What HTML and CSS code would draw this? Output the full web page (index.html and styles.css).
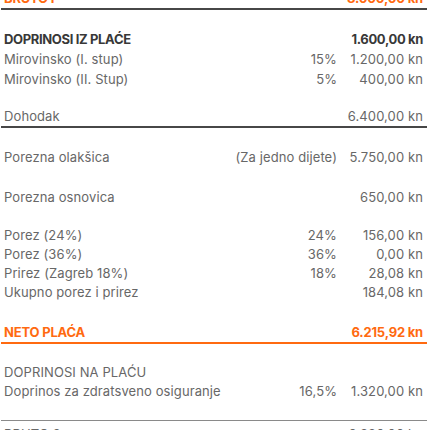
FILE: index.html
```html
<!DOCTYPE html>
<html>
<head>
<meta charset="utf-8">
<link rel="stylesheet" href="styles.css">
</head>
<body>
<div class="sheet">
  <div class="row total orange line-dark"><span class="label">BRUTO I</span><span class="pct"></span><span class="amt">8.000,00 kn</span></div>

  <div class="group g1">
    <div class="row bold"><span class="label">DOPRINOSI IZ PLAĆE</span><span class="pct"></span><span class="amt">1.600,00 kn</span></div>
    <div class="row"><span class="label">Mirovinsko (I. stup)</span><span class="pct">15%</span><span class="amt">1.200,00 kn</span></div>
    <div class="row"><span class="label">Mirovinsko (II. Stup)</span><span class="pct">5%</span><span class="amt">400,00 kn</span></div>
  </div>

  <div class="group g2">
    <div class="row line-dark"><span class="label">Dohodak</span><span class="pct"></span><span class="amt">6.400,00 kn</span></div>
  </div>

  <div class="group g3">
    <div class="row"><span class="label">Porezna olakšica</span><span class="pct">(Za jedno dijete)</span><span class="amt">5.750,00 kn</span></div>
  </div>

  <div class="group g4">
    <div class="row"><span class="label">Porezna osnovica</span><span class="pct"></span><span class="amt">650,00 kn</span></div>
  </div>

  <div class="group g5">
    <div class="row tight"><span class="label">Porez (24%)</span><span class="pct">24%</span><span class="amt">156,00 kn</span></div>
    <div class="row tight"><span class="label">Porez (36%)</span><span class="pct">36%</span><span class="amt">0,00 kn</span></div>
    <div class="row tight"><span class="label">Prirez (Zagreb 18%)</span><span class="pct">18%</span><span class="amt">28,08 kn</span></div>
    <div class="row tight"><span class="label">Ukupno porez i prirez</span><span class="pct"></span><span class="amt">184,08 kn</span></div>
  </div>

  <div class="group g6">
    <div class="row tight total orange line-orange"><span class="label">NETO PLAĆA</span><span class="pct"></span><span class="amt">6.215,92 kn</span></div>
  </div>

  <div class="group g7">
    <div class="row tight"><span class="label">DOPRINOSI NA PLAĆU</span><span class="pct"></span><span class="amt"></span></div>
    <div class="row tight"><span class="label">Doprinos za zdratsveno osiguranje</span><span class="pct">16,5%</span><span class="amt">1.320,00 kn</span></div>
  </div>

  <div class="group g8 line-top">
    <div class="row last"><span class="label">BRUTO 2</span><span class="pct"></span><span class="amt">9.320,00 kn</span></div>
  </div>
</div>
</body>
</html>
```

FILE: styles.css
```css
html, body {
  margin: 0;
  padding: 0;
  background: #ffffff;
}

body {
  font-family: "Inter", "Roboto", "Liberation Sans", sans-serif;
  font-size: 13px;
  color: #676767;
  letter-spacing: 0.1px;
  overflow: hidden;
}

.sheet {
  margin: -12px 3px 0 1px;
}

.row {
  display: grid;
  grid-template-columns: 1fr auto 86px;
  align-items: center;
  height: 20px;
  line-height: 20px;
  padding: 0 4px 0 3px;
  white-space: nowrap;
}

.row.tight {
  height: 19px;
  line-height: 19px;
}

.row.last {
  padding-top: 3px;
}

.pct {
  text-align: right;
}

.amt {
  text-align: right;
}

.bold {
  font-weight: 700;
  color: #383838;
  letter-spacing: -0.35px;
}

.total {
  font-weight: 700;
  letter-spacing: -0.2px;
}

.orange {
  color: #ff6a10;
}

.line-dark {
  border-bottom: 2px solid #474747;
}

.line-orange {
  border-bottom: 2px solid #ff6a10;
}

.line-top {
  border-top: 1px solid #8a8a8a;
}

.g1 { margin-top: 19px; }
.g2 { margin-top: 17px; }
.g3 { margin-top: 19px; }
.g4 { margin-top: 20px; }
.g5 { margin-top: 19px; }
.g6 { margin-top: 21px; }
.g7 { margin-top: 19px; }
.g8 { margin-top: 19px; }
```
